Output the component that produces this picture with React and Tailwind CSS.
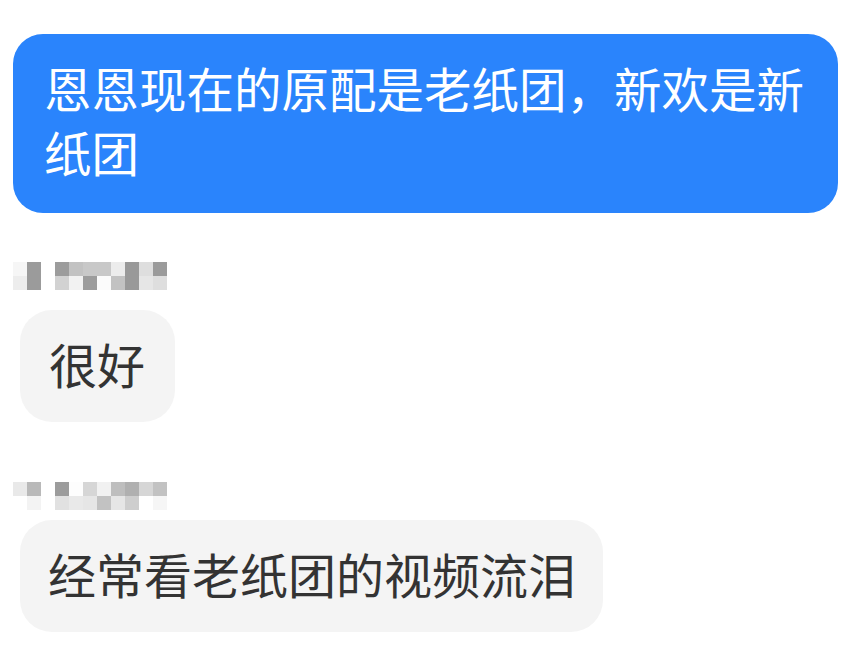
export default function App() {
  const font = { fontFamily: '"Noto Sans CJK SC", "Noto Sans", sans-serif' };
  const m1 = [
    ["#f6f6f6", "#9b9b9b", "#ffffff", "#9c9c9c", "#c2c2c2", "#c8c8c8", "#c8c8c8", "#ececec", "#999999", "#dedede", "#9b9b9b"],
    ["#ededed", "#9b9b9b", "#ffffff", "#d2d2d2", "#f2f2f2", "#9c9c9c", "#fbfbfb", "#c2c2c2", "#999999", "#e6e6e6", "#dedede"],
  ];
  const m2 = [
    ["#e9e9e9", "#b9b9b9", "#ffffff", "#9c9c9c", "#fdfdfd", "#d6d6d6", "#f1f1f1", "#bebebe", "#b0b0b0", "#d6d6d6", "#c2c2c2"],
    ["#ffffff", "#f3f3f3", "#ffffff", "#e1e1e1", "#e9e9e9", "#e6e6e6", "#c2c2c2", "#e6e6e6", "#cecece", "#ffffff", "#f6f6f6"],
  ];
  const Mosaic = ({ rows, className }) => (
    <div className={"ml-[13px] flex flex-col blur-[0.6px] " + className}>
      {rows.map((r, i) => (
        <div key={i} className="flex">
          {r.map((c, j) => (
            <div key={j} className="w-[14px] h-[14px]" style={{ backgroundColor: c }} />
          ))}
        </div>
      ))}
    </div>
  );
  return (
    <div className="w-[861px] h-[661px] bg-white overflow-hidden flex flex-col items-start pt-[34px] font-normal" style={font}>
      <div className="ml-[13px] w-[825px] h-[179px] rounded-[30px] bg-[#2a84fc] pl-[31px] pr-[25px] pt-[22px] text-white text-[47.5px] leading-[64px]">
        恩恩现在的原配是老纸团，新欢是新纸团
      </div>
      <Mosaic rows={m1} className="mt-[49px]" />
      <div className="mt-[20px] ml-[20px] h-[112px] rounded-[32px] bg-[#f4f4f4] pl-[29px] pr-[30px] pt-[21px] text-[#333333] text-[48px] leading-[64px]">
        很好
      </div>
      <Mosaic rows={m2} className="mt-[60px]" />
      <div className="mt-[10px] ml-[20px] h-[112px] rounded-[32px] bg-[#f4f4f4] pl-[28px] pr-[27px] pt-[21px] text-[#333333] text-[48px] leading-[64px] whitespace-nowrap">
        经常看老纸团的视频流泪
      </div>
    </div>
  );
}
